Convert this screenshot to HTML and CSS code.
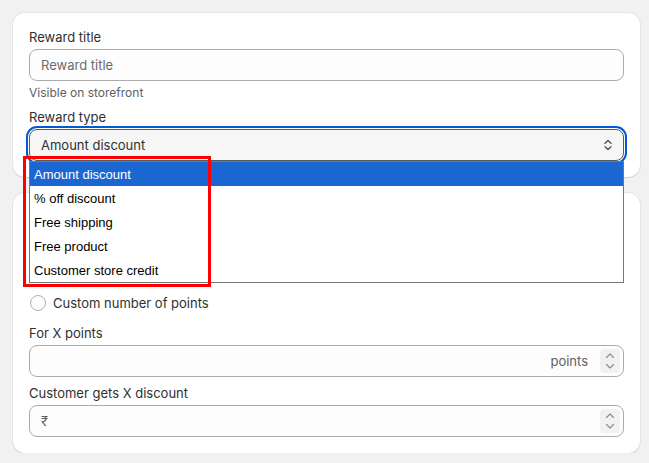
FILE: index.html
```html
<!DOCTYPE html>
<html lang="en">
<head>
<meta charset="utf-8">
<title>Reward</title>
<link rel="stylesheet" href="styles.css">
</head>
<body>
<div class="page">
  <section class="card card-first">
    <label class="label">Reward title</label>
    <div class="input"><span class="placeholder">Reward title</span></div>
    <div class="help">Visible on storefront</div>
    <label class="label label-gap">Reward type</label>
    <div class="select-field">
      <div class="select">
        <span class="select-value">Amount discount</span>
        <svg class="select-icon" width="20" height="20" viewBox="0 0 20 20" aria-hidden="true">
          <polyline points="7,8.2 10,5.4 13,8.2" fill="none" stroke="#4a4a4a" stroke-width="1.3" stroke-linecap="round" stroke-linejoin="round"/>
          <polyline points="7,11.8 10,14.6 13,11.8" fill="none" stroke="#4a4a4a" stroke-width="1.3" stroke-linecap="round" stroke-linejoin="round"/>
        </svg>
      </div>
      <ul class="listbox">
        <li class="option option-active">Amount discount</li>
        <li class="option">% off discount</li>
        <li class="option">Free shipping</li>
        <li class="option">Free product</li>
        <li class="option">Customer store credit</li>
      </ul>
    </div>
  </section>

  <section class="card card-second">
    <div class="hidden-area"></div>
    <div class="radio-row">
      <span class="radio"></span>
      <span class="radio-label">Custom number of points</span>
    </div>
    <label class="label label-gap-2">For X points</label>
    <div class="input number">
      <span class="grow"></span>
      <span class="suffix">points</span>
      <span class="spinner">
        <svg width="20" height="24" viewBox="0 0 20 24" aria-hidden="true">
          <polyline points="6.5,8.5 10,5 13.5,8.5" fill="none" stroke="#8a8a8a" stroke-width="1.1" stroke-linecap="round" stroke-linejoin="round"/>
          <polyline points="6.5,15.5 10,19 13.5,15.5" fill="none" stroke="#8a8a8a" stroke-width="1.1" stroke-linecap="round" stroke-linejoin="round"/>
        </svg>
      </span>
    </div>
    <label class="label label-gap-3">Customer gets X discount</label>
    <div class="input number">
      <span class="prefix">₹</span>
      <span class="grow"></span>
      <span class="spinner">
        <svg width="20" height="24" viewBox="0 0 20 24" aria-hidden="true">
          <polyline points="6.5,8.5 10,5 13.5,8.5" fill="none" stroke="#8a8a8a" stroke-width="1.1" stroke-linecap="round" stroke-linejoin="round"/>
          <polyline points="6.5,15.5 10,19 13.5,15.5" fill="none" stroke="#8a8a8a" stroke-width="1.1" stroke-linecap="round" stroke-linejoin="round"/>
        </svg>
      </span>
    </div>
  </section>

  <div class="annotation"></div>
</div>
</body>
</html>
```

FILE: styles.css
```css
* {
  box-sizing: border-box;
}

html, body {
  margin: 0;
  padding: 0;
  background: #f1f1f1;
}

body {
  font-family: "Inter", "Noto Sans", sans-serif;
  font-size: 13px;
  color: #303030;
}

.page {
  position: relative;
  padding: 13px 9px 0 13px;
  display: flex;
  flex-direction: column;
  gap: 16px;
}

.card {
  background: #ffffff;
  border-radius: 12px;
  padding: 16px;
  display: flex;
  flex-direction: column;
  box-shadow: 0 1px 0 0 rgba(26, 26, 26, 0.10), 0 0 0 1px rgba(0, 0, 0, 0.05);
}

.label {
  display: block;
  line-height: 16px;
  margin-bottom: 4px;
  color: #303030;
}

.label-gap {
  margin-top: 8px;
}

.label-gap-2 {
  margin-top: 12px;
}

.label-gap-3 {
  margin-top: 8px;
}

.input {
  height: 32px;
  border: 1px solid #ababab;
  border-radius: 8px;
  background: #fdfdfd;
  display: flex;
  align-items: center;
  padding: 0 3px 0 11px;
  line-height: 20px;
}

.placeholder {
  color: #6b6b6b;
}

.help {
  margin-top: 4px;
  font-size: 12px;
  line-height: 16px;
  color: #616161;
}

.select-field {
  position: relative;
}

.select {
  height: 32px;
  border: 1px solid #5a5a5a;
  border-radius: 8px;
  background: #f6f6f6;
  outline: 2px solid #005bd3;
  outline-offset: 1px;
  display: flex;
  align-items: center;
  justify-content: space-between;
  padding: 0 5px 0 11px;
  line-height: 20px;
  color: #303030;
}

.select-icon {
  display: block;
}

.listbox {
  position: absolute;
  top: 32px;
  left: 0;
  right: 0;
  z-index: 10;
  margin: 0;
  padding: 0;
  list-style: none;
  background: #ffffff;
  border: 1px solid #767676;
  font-family: "Liberation Sans", Arial, sans-serif;
  font-size: 13px;
  color: #000000;
}

.option {
  height: 24px;
  line-height: 23px;
  padding: 1px 0 0 4px;
}

.option-active {
  background: #1a67d2;
  color: #ffffff;
}

.hidden-area {
  height: 84px;
}

.radio-row {
  display: flex;
  align-items: center;
  gap: 7px;
  height: 20px;
  line-height: 20px;
}

.radio {
  width: 16px;
  height: 16px;
  margin-left: 1px;
  border-radius: 50%;
  border: 1px solid #b0b0b0;
  background: #fdfdfd;
}

.radio-label {
  color: #303030;
}

.grow {
  flex: 1;
}

.suffix {
  color: #616161;
  margin-right: 12px;
}

.prefix {
  color: #616161;
}

.spinner {
  width: 20px;
  height: 24px;
  border-radius: 4px;
  background: #f1f1f1;
  display: flex;
}

.spinner svg {
  display: block;
}

.annotation {
  position: absolute;
  left: 23px;
  top: 156px;
  width: 188px;
  height: 131px;
  border: 3px solid #ff0000;
  z-index: 20;
  pointer-events: none;
}
```
